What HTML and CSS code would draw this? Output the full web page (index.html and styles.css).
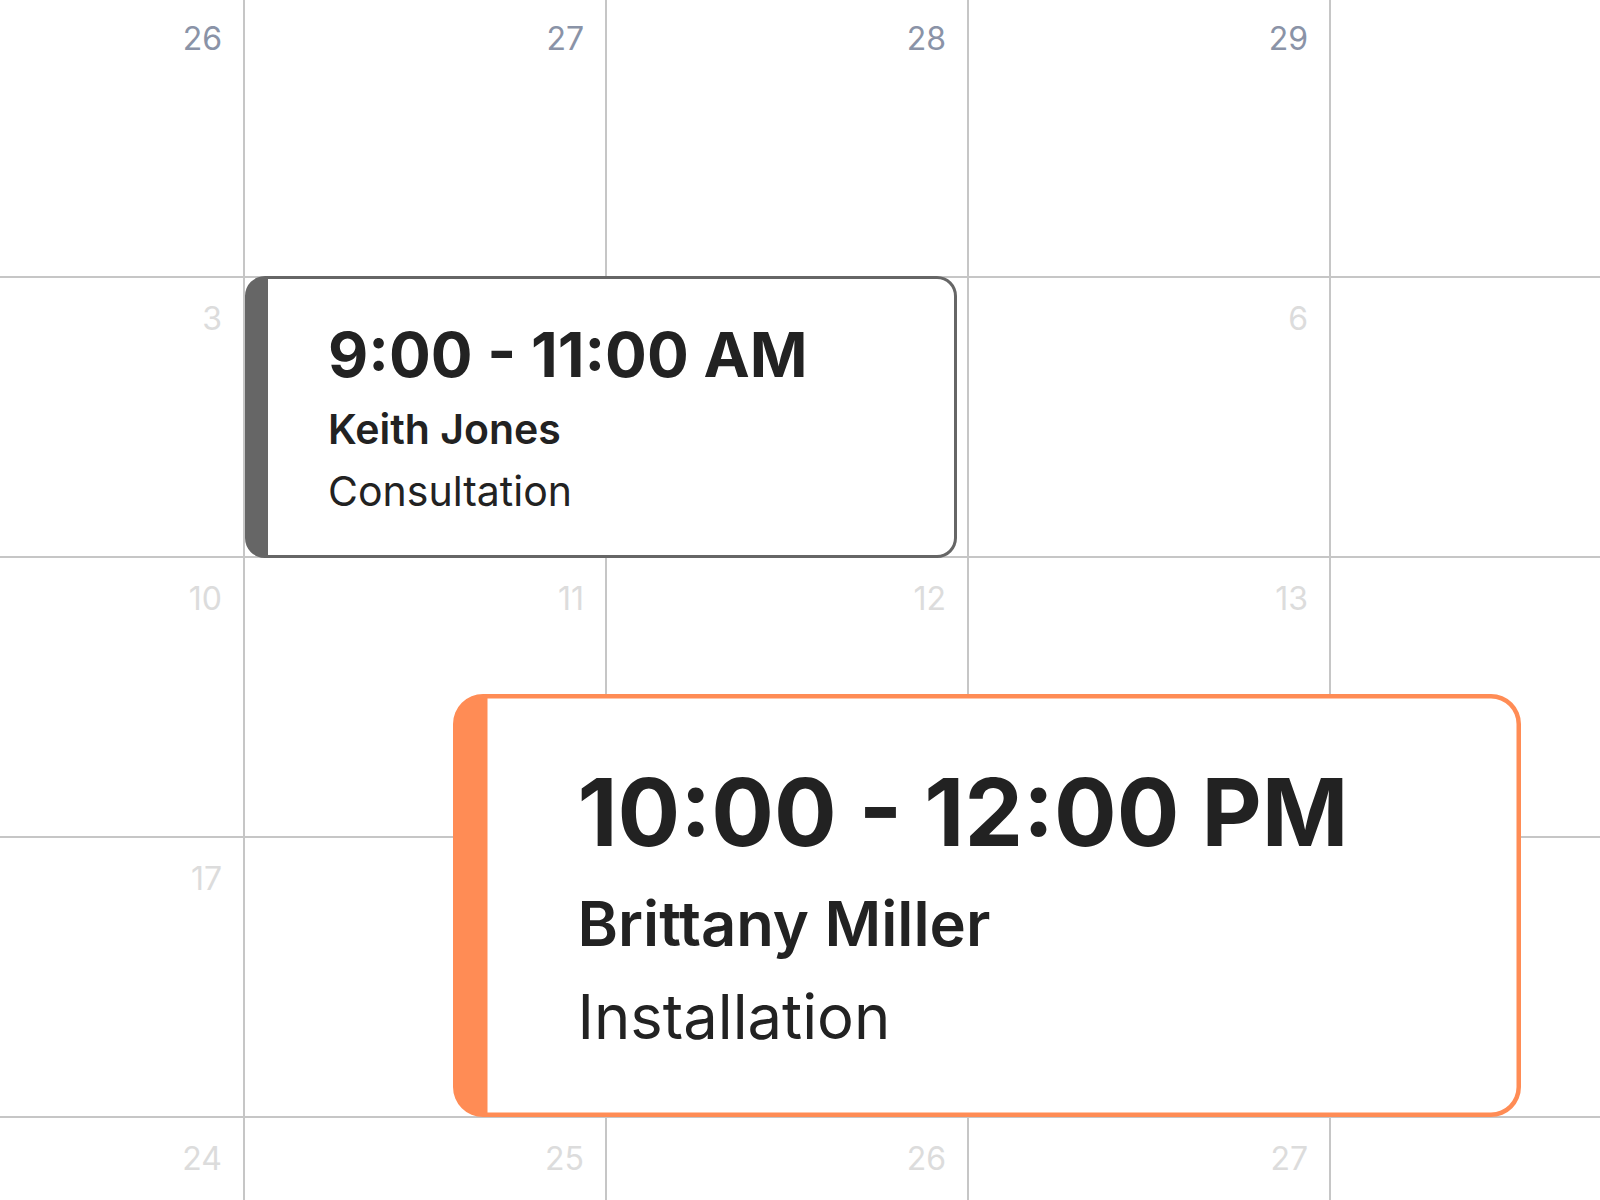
FILE: index.html
```html
<!DOCTYPE html>
<html lang="en">
<head>
<meta charset="utf-8">
<title>Calendar</title>
<link rel="stylesheet" href="styles.css">
</head>
<body>
<div class="board">
  <div class="calendar">
    <div class="day prev">26</div><div class="day prev">27</div><div class="day prev">28</div><div class="day prev">29</div><div class="day prev">30</div>
    <div class="day">3</div><div class="day">4</div><div class="day">5</div><div class="day">6</div><div class="day">7</div>
    <div class="day">10</div><div class="day">11</div><div class="day">12</div><div class="day">13</div><div class="day">14</div>
    <div class="day">17</div><div class="day">18</div><div class="day">19</div><div class="day">20</div><div class="day">21</div>
    <div class="day">24</div><div class="day">25</div><div class="day">26</div><div class="day">27</div><div class="day">28</div>
  </div>

  <div class="event event-placed">
    <div class="event-time">9:00 - 11:00 AM</div>
    <div class="event-name">Keith Jones</div>
    <div class="event-type">Consultation</div>
  </div>

  <div class="event event-dragging">
    <div class="event-time">10:00 - 12:00 PM</div>
    <div class="event-name">Brittany Miller</div>
    <div class="event-type">Installation</div>
  </div>
</div>
</body>
</html>
```

FILE: styles.css
```css
html, body {
  margin: 0;
  padding: 0;
  background: #ffffff;
}

body {
  font-family: Inter, "Noto Sans", "Liberation Sans", sans-serif;
  color: #222222;
}

.board {
  position: relative;
  width: 1600px;
  height: 1200px;
  overflow: hidden;
  background: #ffffff;
}

.calendar {
  display: grid;
  grid-template-columns: repeat(5, 360px);
  grid-auto-rows: 278px;
  gap: 2px;
  background: #c6c6c6;
  margin-left: -117px;
  margin-top: -2px;
  width: max-content;
}

.day {
  background: #ffffff;
  padding: 21px 21px 0 0;
  text-align: right;
  font-size: 32px;
  line-height: 40px;
  color: #dcdcdc;
}

.day.prev {
  color: #8a93a7;
}

.event {
  position: absolute;
  box-sizing: border-box;
  width: 712px;
  height: 282px;
  background: #ffffff;
  border: 3px solid #666666;
  border-left-width: 23px;
  border-radius: 20px;
  padding: 32px 60px;
  color: #222222;
}

.event-placed {
  left: 245px;
  top: 276px;
}

.event-dragging {
  left: 453px;
  top: 694px;
  border-color: #ff8c55;
  transform: scale(1.5);
  transform-origin: 0 0;
}

.event-time {
  font-size: 62px;
  line-height: 87px;
  font-weight: 700;
  white-space: nowrap;
}

.event-name {
  font-size: 41px;
  line-height: 62px;
  font-weight: 600;
  white-space: nowrap;
}

.event-type {
  font-size: 41px;
  line-height: 62px;
  font-weight: 400;
  white-space: nowrap;
}
```
